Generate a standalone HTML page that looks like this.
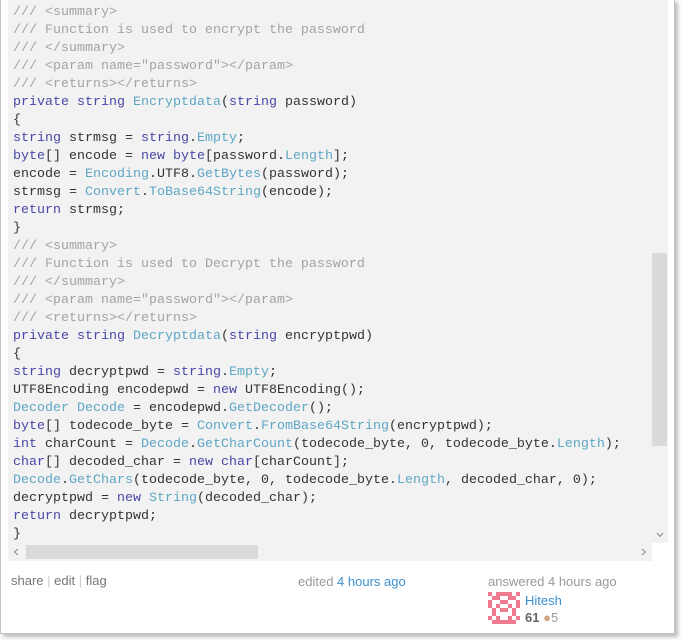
<!DOCTYPE html>
<html><head><style>
body{margin:0;width:685px;height:643px;background:#fff;position:relative;overflow:hidden;font-family:"Liberation Sans",sans-serif}
.frame{position:absolute;left:0;top:-1px;width:673px;height:633px;border:1px solid #c4c4c4;box-shadow:3px 3px 4px #bbb;background:#fff}
.code{position:absolute;left:8px;top:0;width:644px;height:543px;background:#f2f2f2;overflow:hidden}
pre{margin:0;padding:4px 0 0 5px;font-family:"Liberation Mono",monospace;font-size:13.33px;line-height:18px;color:#333}
.c{color:#a3a3a3}.k{color:#4848a8}.t{color:#5ea7c4}
.vs{position:absolute;left:652px;top:0;width:16px;height:543px;background:#f2f2f2}
.vt{position:absolute;left:652px;top:253px;width:15px;height:193px;background:#dadada}
.hs{position:absolute;left:8px;top:543px;width:644px;height:18px;background:#f2f2f2}
.ht{position:absolute;left:26px;top:545px;width:232px;height:14px;background:#dadada}
.ar{position:absolute;font-size:15px;color:#888}
.f{position:absolute;font-size:13px;color:#777}
a{color:#3a8fd0;text-decoration:none}
</style></head><body>
<div class="frame"></div>
<div class="code"><pre><span class="c">/// &lt;summary&gt;
/// Function is used to encrypt the password
/// &lt;/summary&gt;
/// &lt;param name="password"&gt;&lt;/param&gt;
/// &lt;returns&gt;&lt;/returns&gt;</span>
<span class="k">private string</span> <span class="t">Encryptdata</span>(<span class="k">string</span> password)
{
<span class="k">string</span> strmsg = <span class="k">string</span>.<span class="t">Empty</span>;
<span class="k">byte</span>[] encode = <span class="k">new byte</span>[password.<span class="t">Length</span>];
encode = <span class="t">Encoding</span>.UTF8.<span class="t">GetBytes</span>(password);
strmsg = <span class="t">Convert</span>.<span class="t">ToBase64String</span>(encode);
<span class="k">return</span> strmsg;
}
<span class="c">/// &lt;summary&gt;
/// Function is used to Decrypt the password
/// &lt;/summary&gt;
/// &lt;param name="password"&gt;&lt;/param&gt;
/// &lt;returns&gt;&lt;/returns&gt;</span>
<span class="k">private string</span> <span class="t">Decryptdata</span>(<span class="k">string</span> encryptpwd)
{
<span class="k">string</span> decryptpwd = <span class="k">string</span>.<span class="t">Empty</span>;
UTF8Encoding encodepwd = <span class="k">new</span> UTF8Encoding();
<span class="t">Decoder Decode</span> = encodepwd.<span class="t">GetDecoder</span>();
<span class="k">byte</span>[] todecode_byte = <span class="t">Convert</span>.<span class="t">FromBase64String</span>(encryptpwd);
<span class="k">int</span> charCount = <span class="t">Decode</span>.<span class="t">GetCharCount</span>(todecode_byte, 0, todecode_byte.<span class="t">Length</span>);
<span class="k">char</span>[] decoded_char = <span class="k">new char</span>[charCount];
<span class="t">Decode</span>.<span class="t">GetChars</span>(todecode_byte, 0, todecode_byte.<span class="t">Length</span>, decoded_char, 0);
decryptpwd = <span class="k">new</span> <span class="t">String</span>(decoded_char);
<span class="k">return</span> decryptpwd;
}</pre></div>
<div class="vs"></div><div class="vt"></div>
<svg style="position:absolute;left:656px;top:532px" width="8" height="6"><path d="M1 1L4 4.5L7 1" stroke="#888" fill="none" stroke-width="1"/></svg>
<div class="hs"></div><div class="ht"></div>
<svg style="position:absolute;left:13px;top:548px" width="6" height="8"><path d="M5 1L1.5 4L5 7" stroke="#888" fill="none"/></svg>
<svg style="position:absolute;left:641px;top:548px" width="6" height="8"><path d="M1 1L4.5 4L1 7" stroke="#888" fill="none"/></svg>
<div class="f" style="left:11px;top:573px">share <span style="color:#ccc">|</span> edit <span style="color:#ccc">|</span> flag</div>
<div class="f" style="left:298px;top:574px;color:#999">edited <a>4 hours ago</a></div>
<div class="f" style="left:488px;top:574px;color:#999">answered 4 hours ago</div>
<svg style="position:absolute;left:488px;top:592px" width="32" height="32" viewBox="0 0 8 8"><g fill="#f07a90">
<rect x="0" y="0" width="1" height="1"/><rect x="2" y="0" width="4" height="1"/><rect x="7" y="0" width="1" height="1"/>
<rect x="1" y="1" width="2" height="1"/><rect x="5" y="1" width="2" height="1"/><rect x="0" y="2" width="1" height="2"/><rect x="3" y="2" width="2" height="1"/><rect x="7" y="2" width="1" height="2"/>
<rect x="2" y="3" width="1" height="1"/><rect x="5" y="3" width="1" height="1"/><rect x="1" y="4" width="1" height="2"/><rect x="3" y="4" width="2" height="1"/><rect x="6" y="4" width="1" height="2"/>
<rect x="0" y="6" width="1" height="1"/><rect x="2" y="6" width="1" height="1"/><rect x="5" y="6" width="1" height="1"/><rect x="7" y="6" width="1" height="1"/><rect x="1" y="7" width="6" height="1"/></g></svg>
<div class="f" style="left:525px;top:593px"><a>Hitesh</a></div>
<div class="f" style="left:525px;top:610px"><b style="color:#666">61</b> <span style="color:#d1a684">&#9679;</span><span style="color:#999">5</span></div>
</body></html>
